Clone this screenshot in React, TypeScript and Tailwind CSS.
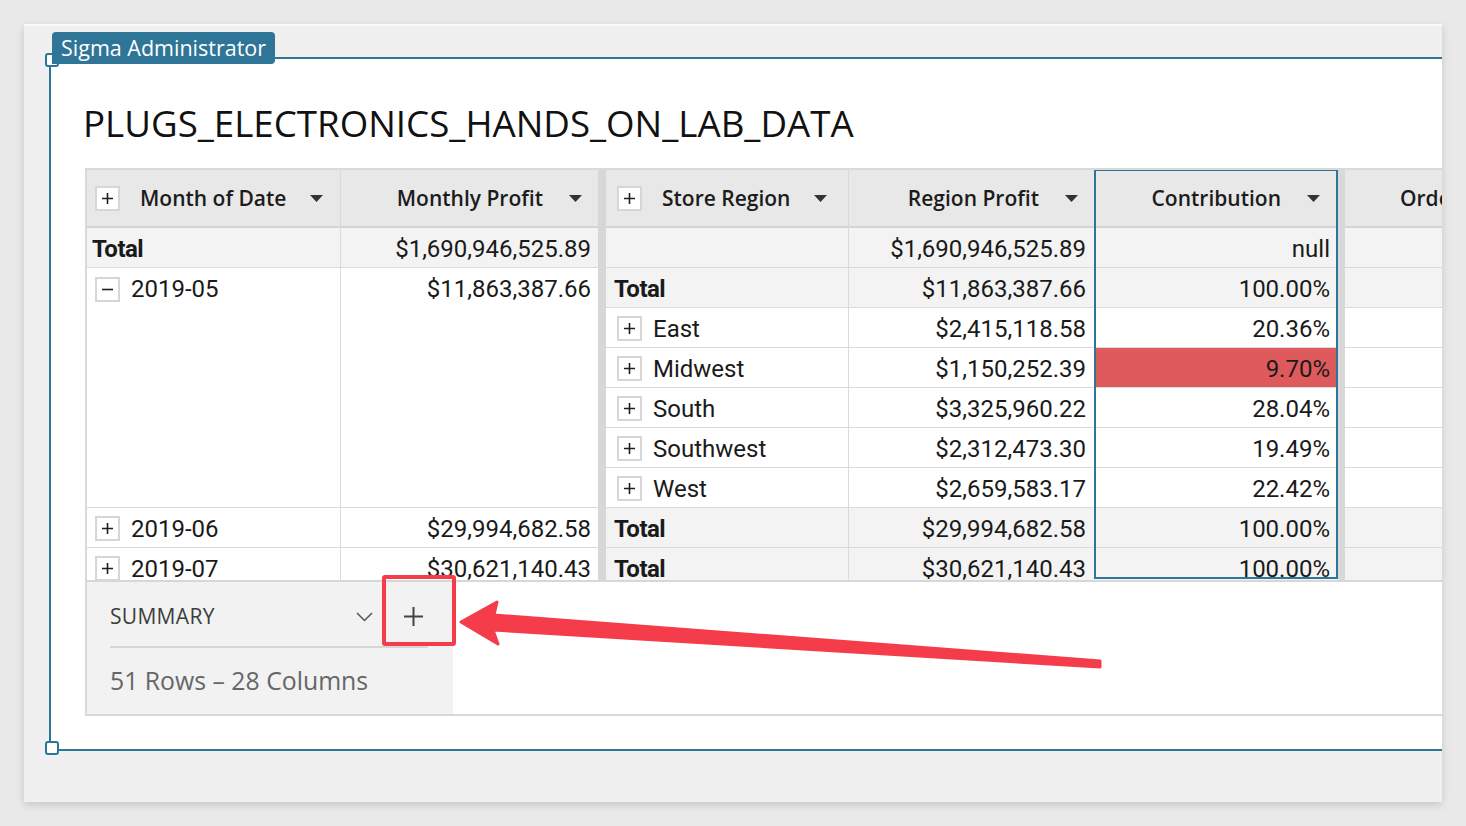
import React from "react";

const SANS = "font-['Open_Sans','Noto_Sans',sans-serif]";
const NUM = "font-['Roboto','Liberation_Sans',sans-serif]";

const Caret = () => (
  <svg width="13" height="7" viewBox="0 0 13 7" className="shrink-0">
    <path d="M0 0H13L6.5 7Z" fill="#333" />
  </svg>
);

const Box = ({ minus }: { minus?: boolean }) => (
  <div className="w-[25px] h-[25px] border-2 border-[#d6d6d6] bg-white flex items-center justify-center shrink-0">
    <svg width="13" height="13" viewBox="0 0 13 13">
      <path d={minus ? "M1 6.5H12" : "M1 6.5H12M6.5 1V12"} stroke="#1f1f1f" strokeWidth="1.6" />
    </svg>
  </div>
);

const HEAD = `h-[58px] shrink-0 bg-[#e8e8e8] border-b-2 border-[#d4d4d4] flex items-center pt-[1px] ${SANS} text-[21px] font-semibold text-[#1c1c1c] whitespace-nowrap`;
const ROW = `h-[40px] shrink-0 border-b border-[#dadada] flex items-center pt-[2px] ${NUM} text-[24px] text-[#1a1a1a] whitespace-nowrap`;

const Val = ({ v, gray, red }: { v: string; gray?: boolean; red?: boolean }) => (
  <div className={`${ROW} justify-end pr-[8px] ${red ? "bg-[#df5a5d]" : gray ? "bg-[#f3f3f3]" : "bg-white"}`}>{v}</div>
);

const TotalCell = ({ pl }: { pl: string }) => (
  <div className={`${ROW} bg-[#f3f3f3] ${pl} font-bold tracking-[-0.5px]`}>Total</div>
);

const RegionCell = ({ name }: { name: string }) => (
  <div className={`${ROW} bg-white pl-[11px] gap-[11px]`}>
    <Box />
    <span>{name}</span>
  </div>
);

export default function App() {
  const regions = [
    ["East", "$2,415,118.58", "20.36%"],
    ["Midwest", "$1,150,252.39", "9.70%"],
    ["South", "$3,325,960.22", "28.04%"],
    ["Southwest", "$2,312,473.30", "19.49%"],
    ["West", "$2,659,583.17", "22.42%"],
  ];
  return (
    <div className="relative w-[1466px] h-[826px] overflow-hidden bg-[#e9e9e9]">
      <div className="pt-[24px] pl-[24px]">
        <div className="w-[1418px] h-[778px] bg-[#f0f0f0] border-t-2 border-[#fafafa] overflow-hidden shadow-[0_3px_8px_rgba(0,0,0,0.14)]">
          <div className="relative ml-[25px] mt-[31px] w-[1440px] h-[694px] border-2 border-[#2e7598] bg-white pl-[34px]">
            {/* label */}
            <div className={`absolute left-[1px] top-[-27px] h-[32px] px-[9px] bg-[#2e7598] rounded-t-[4px] rounded-br-[4px] flex items-center text-white text-[21.5px] ${SANS} z-10`}>
              Sigma Administrator
            </div>
            <div className="absolute left-[-6px] top-[-6px] w-[14px] h-[14px] bg-white border-2 border-[#2e7598] rounded-[3px]" />
            <div className="absolute left-[-6px] bottom-[-6px] w-[14px] h-[14px] bg-white border-2 border-[#2e7598] rounded-[3px]" />

            <div className={`mt-[40px] h-[49px] leading-[49px] ml-[-2px] text-[36.7px] text-[#111] ${SANS}`}>
              PLUGS_ELECTRONICS_HANDS_ON_LAB_DATA
            </div>

            {/* table */}
            <div className="mt-[20px] w-[1400px] h-[548px] border-2 border-[#d9d9d9] flex flex-col">
              <div className="h-[410px] shrink-0 overflow-hidden flex">
                {/* col1 */}
                <div className="w-[254px] shrink-0 flex flex-col border-r border-[#dadada]">
                  <div className={`${HEAD} pl-[8px]`}>
                    <Box />
                    <span className="ml-[20px]">Month of Date</span>
                    <span className="ml-[24px] flex"><Caret /></span>
                  </div>
                  <TotalCell pl="pl-[5px]" />
                  <div className="h-[240px] shrink-0 border-b border-[#dadada] bg-white">
                    <div className={`${ROW} border-b-0 pl-[8px] gap-[11px]`}>
                      <Box minus />
                      <span>2019-05</span>
                    </div>
                  </div>
                  <div className={`${ROW} bg-white pl-[8px] gap-[11px]`}>
                    <Box />
                    <span>2019-06</span>
                  </div>
                  <div className={`${ROW} bg-white pl-[8px] gap-[11px]`}>
                    <Box />
                    <span>2019-07</span>
                  </div>
                </div>
                {/* col2 */}
                <div className="w-[257px] shrink-0 flex flex-col">
                  <div className={`${HEAD} justify-end pr-[16px] gap-[26px]`}>
                    <span>Monthly Profit</span>
                    <Caret />
                  </div>
                  <div className={`${ROW} bg-[#f3f3f3] justify-end pr-[7px]`}>$1,690,946,525.89</div>
                  <div className="h-[240px] shrink-0 border-b border-[#dadada] bg-white">
                    <div className={`${ROW} border-b-0 justify-end pr-[7px]`}>$11,863,387.66</div>
                  </div>
                  <div className={`${ROW} bg-white justify-end pr-[7px]`}>$29,994,682.58</div>
                  <div className={`${ROW} bg-white justify-end pr-[7px]`}>$30,621,140.43</div>
                </div>
                <div className="w-[8px] shrink-0 bg-[#d7d7d7]" />
                {/* col3 */}
                <div className="w-[243px] shrink-0 flex flex-col border-r border-[#dadada]">
                  <div className={`${HEAD} pl-[11px]`}>
                    <Box />
                    <span className="ml-[20px]">Store Region</span>
                    <span className="ml-[24px] flex"><Caret /></span>
                  </div>
                  <div className={`${ROW} bg-[#f3f3f3]`} />
                  <TotalCell pl="pl-[8px]" />
                  {regions.map((r) => (
                    <RegionCell key={r[0]} name={r[0]} />
                  ))}
                  <TotalCell pl="pl-[8px]" />
                  <TotalCell pl="pl-[8px]" />
                </div>
                {/* col4 */}
                <div className="w-[245px] shrink-0 flex flex-col">
                  <div className={`${HEAD} justify-end pr-[16px] gap-[26px]`}>
                    <span>Region Profit</span>
                    <Caret />
                  </div>
                  <Val v="$1,690,946,525.89" gray />
                  <Val v="$11,863,387.66" gray />
                  {regions.map((r) => (
                    <Val key={r[0]} v={r[1]} />
                  ))}
                  <Val v="$29,994,682.58" gray />
                  <Val v="$30,621,140.43" gray />
                </div>
                {/* col5 */}
                <div className="relative w-[244px] shrink-0 flex flex-col overflow-hidden">
                  <div className={`${HEAD} justify-end pr-[18px] gap-[26px]`}>
                    <span>Contribution</span>
                    <Caret />
                  </div>
                  <Val v="null" gray />
                  <Val v="100.00%" gray />
                  {regions.map((r) => (
                    <Val key={r[0]} v={r[2]} red={r[0] === "Midwest"} />
                  ))}
                  <Val v="100.00%" gray />
                  <Val v="100.00%" gray />
                  <div className="absolute left-0 right-0 top-[-1px] bottom-[1px] border-2 border-[#2e7598] pointer-events-none" />
                </div>
                <div className="w-[7px] shrink-0 bg-[#d9d9d9]" />
                {/* col6 */}
                <div className="flex-1 flex flex-col">
                  <div className={`${HEAD} pl-[55px]`}>Order Count</div>
                  <Val v="" gray />
                  <Val v="" gray />
                  {regions.map((r) => (
                    <Val key={r[0]} v="" />
                  ))}
                  <Val v="" gray />
                  <Val v="" gray />
                </div>
              </div>
              {/* footer */}
              <div className="flex-1 border-t-2 border-[#d7d7d7] flex">
                <div className="w-[366px] h-full bg-[#f2f2f2] pl-[23px]">
                  <div className="w-[318px] h-[66px] border-b-2 border-[#d6d6d6] flex items-center pt-[5px] pr-[5px]">
                    <span className={`${SANS} text-[21px] tracking-[0.3px] text-[#3d3d3d]`}>SUMMARY</span>
                    <svg width="17" height="10" viewBox="0 0 17 10" className="ml-auto">
                      <path d="M1 1L8.5 8.5L16 1" stroke="#555" strokeWidth="1.5" fill="none" />
                    </svg>
                    <svg width="19" height="19" viewBox="0 0 19 19" className="ml-[31px]">
                      <path d="M9.5 0V19M0 9.5H19" stroke="#444" strokeWidth="2" />
                    </svg>
                  </div>
                  <div className={`h-[64px] flex items-center pt-[2px] ${SANS} text-[24.8px] text-[#666]`}>51 Rows – 28 Columns</div>
                </div>
                <div className="flex-1 bg-white" />
              </div>
            </div>
          </div>
        </div>
      </div>

      {/* annotation */}
      <div className="absolute left-[382px] top-[575px] w-[74px] h-[71px] border-4 border-[#f43c4b] rounded-[3px]" />
      <svg className="absolute left-0 top-0 pointer-events-none" width="1466" height="826" viewBox="0 0 1466 826">
        <path
          d="M461 622 L497 602 L494 615 L1100 661 L1100 667 L493 630 L498 644 Z"
          fill="#f43c4b"
          stroke="#f43c4b"
          strokeWidth="3"
          strokeLinejoin="round"
        />
      </svg>
    </div>
  );
}
